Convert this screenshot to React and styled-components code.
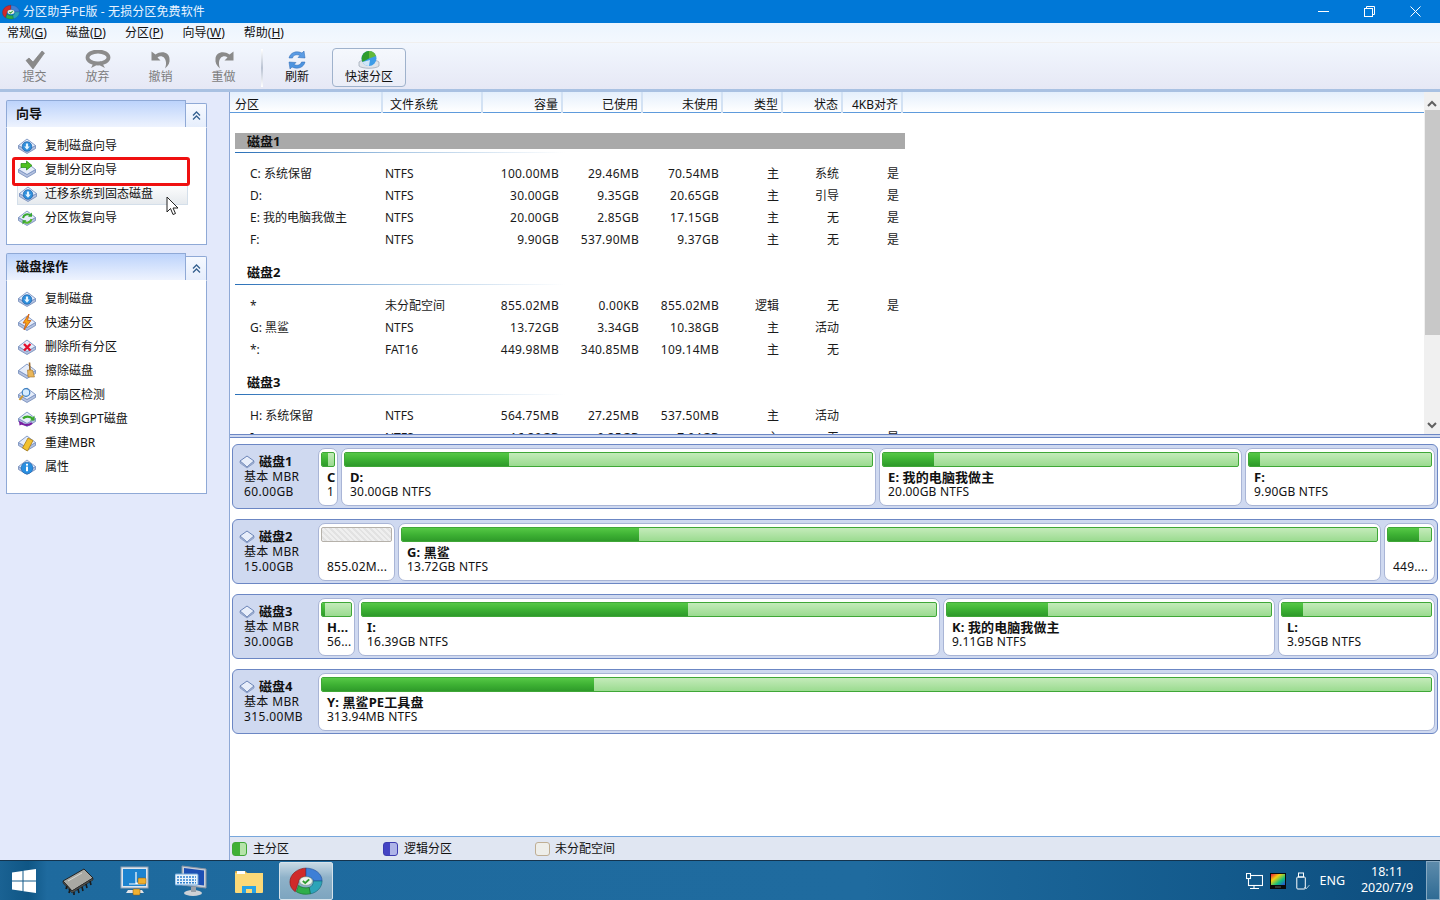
import React from "react";
import styled, { createGlobalStyle, css } from "styled-components";

const Global = createGlobalStyle`
  html, body { margin: 0; padding: 0; width: 1440px; height: 900px; overflow: hidden; background: #e3e9fb; }
  body { font: 12px/14px "Noto Sans", "Noto Sans CJK SC", sans-serif; color: #111; }
  * { box-sizing: border-box; }
`;

const Page = styled.div`
  width: 1440px; height: 900px; display: flex; flex-direction: column; position: relative; overflow: hidden;
`;

/* Title bar */
const TitleBar = styled.header`
  height: 23px; background: #0078d7; color: #fff; display: flex; align-items: center; padding-left: 2px; flex: none;
`;
const TitleText = styled.span` margin-left: 3px; font-size: 12px; letter-spacing: .1px; color: #e8f3ff; `;
const WinButtons = styled.div` margin-left: auto; display: flex; height: 100%; padding-right: 2px; `;
const WinButton = styled.div` width: 46px; display: flex; align-items: center; justify-content: center; `;

/* Menu */
const MenuBar = styled.nav`
  height: 20px; flex: none; display: flex; align-items: center; padding-left: 7px; gap: 19px;
  background: linear-gradient(#ecf5fe, #f3f8fe); border-bottom: 1px solid #f0efee;
`;
const MenuItem = styled.span` white-space: nowrap; u { text-underline-offset: 1px; } `;

/* Toolbar */
const ToolBar = styled.div`
  height: 49px; flex: none; display: flex; align-items: flex-start; padding: 5px 0 0 3px;
  background: linear-gradient(#f2f7fe, #e6e8f5);
  border-bottom: 3px solid #a9c1e2;
`;
const Tool = styled.div`
  width: 63px; height: 39px; display: flex; flex-direction: column; align-items: center; padding-top: 2px;
  color: ${p => (p.$off ? "#7d7d7d" : "#111")};
  svg { flex: none; height: 20px; }
`;
const ToolDivider = styled.div`
  width: 2px; height: 38px; margin: 1px 2px 0 6px; background: linear-gradient(#fff, #b9c2d2 50%, #fff);
`;
const ToolNarrow = styled(Tool)` width: 64px; margin-right: 3px; `;
const ToolActive = styled(Tool)`
  width: 74px; height: 39px; border: 1px solid #9fb2cc; border-radius: 4px; padding-top: 1px; background: linear-gradient(#f5f8fd, #eaedf7);
`;

/* Body */
const Body = styled.div` flex: 1; display: flex; min-height: 0; `;
const Sidebar = styled.aside`
  width: 229px; flex: none; position: relative; background: #e3e9fb; padding: 8px 22px 0 6px;
  display: flex; flex-direction: column; gap: 8px;
`;
const Panel = styled.section` width: 201px; `;
const PanelHead = styled.div` height: 27px; display: flex; align-items: flex-end; `;
const PanelTitle = styled.h3`
  margin: 0; width: 180px; height: 27px; line-height: 25px; padding-left: 9px; font-size: 13px; font-weight: 700; color: #111;
  background: linear-gradient(#bcd3fb, #eef3fe); border: 1px solid #8fa9d6; border-bottom: 0; border-radius: 2px 0 0 0;
`;
const PanelToggle = styled.div`
  width: 21px; height: 24px; background: linear-gradient(#f6f9ff, #e6eefc); border: 1px solid #8fa9d6; border-bottom: 0; border-left: 0;
  border-radius: 0 2px 0 0; display: flex; align-items: center; justify-content: center;
`;
const PanelBody = styled.div`
  height: ${p => p.$h}px; background: #fff; border: 1px solid #8fa9d6; border-top: 1px solid #fff; padding-top: 6px;
`;
const Task = styled.div`
  height: 24px; display: flex; align-items: center; padding-left: 10px; gap: 8px; white-space: nowrap;
  svg { flex: none; }
  ${p => p.$hover && css`
    padding-left: 0; gap: 7px; margin: 1px 18px 1px 10px; height: 22px;
    background: linear-gradient(#fff, #e6eaee); border: 1px solid #d4dfea; border-top: 0;
  `}
`;
const RedMark = styled.div`
  position: absolute; left: 12px; top: 65px; width: 178px; height: 29px; border: 3px solid #ef1010; border-radius: 3px;
`;
const Pointer = styled.svg` position: absolute; left: 166px; top: 104px; `;

/* Main */
const Main = styled.main`
  flex: 1; display: flex; flex-direction: column; border-left: 1px solid #8fa9d6; min-width: 0; background: #fff;
`;
const TablePane = styled.div` height: 343px; flex: none; display: flex; overflow: hidden; `;
const TableArea = styled.div` flex: 1; min-width: 0; overflow: hidden; `;
const Grid = css`
  display: grid; grid-template-columns: 152px 100px 80px 80px 80px 60px 60px 60px; width: 672px;
`;
const HeaderBand = styled.div`
  height: 21px; background: linear-gradient(#e4effc, #fff); border-bottom: 1px solid #5e9bdc;
`;
const HeaderRow = styled.div` ${Grid} height: 20px; `;
const HeadCell = styled.div`
  padding: 5px 3px 0 ${p => p.$pl ?? 3}px; margin-right: -1px; text-align: ${p => (p.$left ? "left" : "right")}; line-height: 16px;
  border-right: 2px solid #d3e2f4; white-space: nowrap;
`;
const Rows = styled.div` padding-top: 5px; `;
const Group = styled.div`
  margin: 14px 0 0 5px; width: 670px; height: 30px;
  &:first-child { margin-top: 15px; }
`;
const GroupBar = styled.div`
  height: 16px; line-height: ${p => (p.$on ? 17 : 15)}px; padding-left: 12px; font-size: 13px; font-weight: 700;
  background: ${p => (p.$on ? "#a9a9a9" : "transparent")};
`;
const GroupLine = styled.div`
  height: 1px; margin-top: 3px; width: 330px; background: linear-gradient(90deg, #2a70b8, #aac8e4 50%, #fff);
`;
const Row = styled.div` ${Grid} height: 22px; line-height: 22px; `;
const Cell = styled.div`
  padding: 0 3px 0 ${p => p.$pl ?? 3}px; text-align: ${p => (p.$left ? "left" : "right")}; white-space: nowrap;
  letter-spacing: ${p => (p.$num ? ".25px" : 0)}; color: #1a1a1a;
`;
const ScrollBar = styled.div`
  width: 16px; flex: none; background: #f0f0f0; display: flex; flex-direction: column; align-items: center; padding: 4px 0 3px;
`;
const ScrollArrow = styled.div` height: 14px; flex: none; display: flex; align-items: center; `;
const ScrollThumb = styled.div` width: 15px; height: 225px; background: #c8c8c8; flex: none; `;
const ScrollRest = styled.div` flex: 1; `;

const Splitter = styled.div`
  height: 4px; flex: none; background: #cfd9f0; border-top: 1px solid #6c87c4; border-bottom: 1px solid #6c87c4; margin-top: -1px;
`;
const DiskMap = styled.div` flex: 1; display: flex; flex-direction: column; gap: 10px; padding: 6px 2px 0; `;
const Disk = styled.article`
  height: 65px; background: #cfd9f0; border: 1px solid #6c87c4; border-radius: 6px; display: flex; padding-top: 3px; width: 1206px;
`;
const DiskInfo = styled.div` width: 85px; flex: none; padding: 6px 0 0 6px; display: flex; flex-direction: column; line-height: 15px; `;
const DiskName = styled.div` display: flex; align-items: center; gap: 4px; font-size: 13px; font-weight: 700; height: 15px; white-space: nowrap; `;
const DiskMeta = styled.div` padding-left: 5px; letter-spacing: .35px; white-space: nowrap; `;
const Partitions = styled.div` display: flex; gap: 3px; `;
const Partition = styled.div`
  width: ${p => p.$w}px; height: 58px; background: #fff; border: 1px solid #a9b5d6; border-radius: 7px; padding: 3px 2px; overflow: hidden; flex: none;
`;
const UsageBar = styled.div`
  height: 15px; border: 1px solid ${p => (p.$empty ? "#b5b1aa" : "#3fa737")}; border-radius: 2px; overflow: hidden;
  background: ${p => p.$empty ? "repeating-linear-gradient(45deg,#efefef 0 2px,#e2e2e2 2px 4px)" : "linear-gradient(#c4ebba,#9bdb90)"};
`;
const UsageFill = styled.div` height: 100%; background: linear-gradient(#56c846, #3eb234 50%, #2e9a2a); `;
const PartText = styled.div` padding: 3px 0 0 6px; white-space: nowrap; `;
const PartName = styled.div` font-size: 13px; font-weight: 700; height: 15px; line-height: 15px; letter-spacing: .1px; `;
const PartSize = styled.div` letter-spacing: .2px; line-height: 14px; `;
const Legend = styled.footer`
  height: 24px; flex: none; background: #e0e6f2; border-top: 1px solid #78a7dc; display: flex; align-items: center; padding: 1px 0 0 2px;
`;
const LegendItem = styled.div` width: ${p => p.$w}px; display: flex; align-items: center; gap: ${p => p.$gap ?? 6}px; flex: none; `;
const Swatch = styled.i`
  width: 15px; height: 14px; border-radius: 3px; border: 1px solid ${p => p.$b}; display: block;
  background: linear-gradient(90deg, ${p => p.$d} 50%, ${p => p.$l} 50%);
`;

/* Taskbar */
const Taskbar = styled.div`
  height: 40px; flex: none; display: flex; align-items: center; color: #fff; position: relative;
  background: linear-gradient(90deg, #1e6a9e, #1f6b9f 60%, #135a8c 85%, #0d4c7c); border-top: 1px solid #14334d;
`;
const StartButton = styled.div` width: 47px; height: 100%; display: flex; align-items: center; padding-left: 12px; background: linear-gradient(90deg,#1a6293,#0f5685 60%,#1e6a9e); `;
const Pin = styled.div` width: ${p => p.$w}px; height: 100%; display: flex; align-items: center; justify-content: center; flex: none; `;
const PinActive = styled(Pin)`
  height: 38px; background: linear-gradient(#c7d9e4, #8fb2c9 40%, #7da5bf); border: 1px solid #d5e2ea; border-radius: 2px; margin-left: 2px;
`;
const Tray = styled.div` margin-left: auto; display: flex; align-items: center; height: 100%; `;
const TrayIcon = styled.div` width: ${p => p.$w}px; display: flex; justify-content: center; flex: none; `;
const TrayLang = styled.span` margin: 0 12px 0 5px; font-size: 12.5px; `;
const Clock = styled.div` width: 60px; text-align: center; line-height: 16px; font-size: 12.5px; margin-top: -2px; `;
const ShowDesktop = styled.div` width: 14px; height: 39px; margin-left: 9px; background: linear-gradient(#5d8bab,#2f6b94); border: 1px solid #87a9c2; `;

/* ---------- drawings ---------- */
const Plate = () => (
  <g>
    <path d="M1.500 9.500 10 14.500l8.500-5v3L10 17.500l-8.500-5z" fill="#b4c2e0" stroke="#6f88b8" strokeWidth=".8" />
    <path d="M1.500 9.500 10 3l8.500 6.500-8.500 5z" fill="#e6edfa" stroke="#7b93c2" strokeWidth=".9" />
  </g>
);
const DiskIcon = ({ children }) => (
  <svg width="20" height="20" viewBox="0 0 20 20"><Plate />{children}</svg>
);
const BlueArrow = () => (<g><circle cx="10" cy="10.500" r="4.800" fill="#2f8fdc" stroke="#1a5fa8" strokeWidth=".7" /><path d="M8.900 7.500h2.200v3h1.700L10 13.700l-2.800-3.200h1.700z" fill="#e6f5ff" /></g>);
const icons = {
  copyDisk: <BlueArrow />,
  copyPart: <path d="M4 3.500h5.500V1L15 5.500 9.500 10V7.500H4z" fill="#4fc01f" stroke="#1f8a14" strokeWidth=".7" />,
  recover: <g fill="none" strokeWidth="2"><path d="M6 10a4.500 4.500 0 0 1 7.500-2.500" stroke="#37a72f" /><path d="M14.500 11a4.500 4.500 0 0 1-7.500 2.500" stroke="#55b92a" /><path d="M15 4.500v4.200h-4z M5.500 16.500v-4.200h4z" fill="#37a72f" stroke="none" /></g>,
  bolt: <path d="M12 1 6 10h3l-2 7 7-9.500h-3.400z" fill="#f7a416" stroke="#c8550c" strokeWidth=".8" />,
  del: <path d="M7 7l6.500 6.500M13.500 7 7 13.500" fill="none" stroke="#e3102c" strokeWidth="2.400" />,
  broom: <g><path d="M12.500 1.500 13 9" stroke="#9a6a2c" strokeWidth="1.600" /><path d="M10.500 9h5l2 7h-6.500z" fill="#e9b65a" stroke="#a3742c" strokeWidth=".6" /></g>,
  scan: <g><circle cx="9" cy="7.500" r="3.800" fill="#d6ecff" stroke="#3b7ec0" strokeWidth="1.200" /><path d="M6 10.500 2.500 15" stroke="#d29a2e" strokeWidth="2" /></g>,
  gpt: <g fill="none" strokeWidth="2.200"><path d="M4 13.500c2 3 8 3.500 11 .5" stroke="#7a1fa2" /><path d="M6 9.500c2-2.500 7-2.800 10 .5" stroke="#3aa92c" /><path d="M17.500 6.500v5h-4.500z" fill="#3aa92c" stroke="none" /><path d="M2 11.500l.5 5 4-1.500z" fill="#7a1fa2" stroke="none" /></g>,
  mbr: <path d="M5.500 15 11 5l5 2.500L10.500 18z" fill="#f2c12e" stroke="#a97b10" strokeWidth=".8" />,
  info: <g><circle cx="10" cy="11" r="5.800" fill="#2a8fe0" stroke="#1868b4" strokeWidth=".7" /><rect x="9" y="9.600" width="2" height="4.600" fill="#fff" /><rect x="9" y="6.800" width="2" height="1.800" fill="#fff" /></g>,
};
const Check = () => (<svg width="24" height="20" viewBox="0 0 24 20"><path d="M3 10.500 6 8l4 4L19 1l2.500 2L10 19z" fill="#8a8a8a" stroke="#777" strokeWidth=".6" /></svg>);
const Discard = () => (<svg width="26" height="20" viewBox="0 0 26 20"><ellipse cx="13" cy="7.500" rx="10.500" ry="6" fill="none" stroke="#8c8c8c" strokeWidth="3.800" /><path d="M6 18l3.500-7 3.500 3 3-3 4 7-4-2-3-2-3 2z" fill="#8c8c8c" /></svg>);
const Undo = ({ flip }) => (
  <svg width="22" height="20" viewBox="0 0 22 20"><g transform={flip ? "translate(22 0) scale(-1 1)" : undefined}><path d="M1.500 1.500v9h9l-3-3c3-2.500 8-1 8.500 5 .2 2-.3 4-1 6 3.500-3 5-6 4.500-9.500C19.600 3 12 0 5.500 4.500z" fill="#8a8a8a" /></g></svg>
);
const Refresh = () => (
  <svg width="22" height="20" viewBox="0 0 22 20"><path d="M3 8C4 3 10 0 16 3l2-2 1 7-7-.5 2-2C11 4 7 5 6.500 8z" fill="#5a9be4" stroke="#2a66b0" strokeWidth=".5" /><path d="M19 12c-1 5-7 8-13 5l-2 2-1-7 7 .5-2 2c3 1.500 7 .5 7.500-2.500z" fill="#4d94e0" stroke="#2a66b0" strokeWidth=".5" /></svg>
);
const QuickPart = () => (
  <svg width="26" height="20" viewBox="0 0 26 20"><path d="M3 12c3-3 17-3 20 0v4c-3 3-17 3-20 0z" fill="#dfe3ea" stroke="#9aa3b2" strokeWidth=".7" /><circle cx="13" cy="8.500" r="7.500" fill="#3d9ce8" /><path d="M13 1a7.500 7.500 0 0 0-6.500 11L13 8.500z" fill="#2e9d2e" /><path d="M13 1a7.500 7.500 0 0 1 7 5L13 8.500z" fill="#62b93a" /><path d="M6.500 12a7.500 7.500 0 0 0 6.500 4l1-6z" fill="#cfe6f8" /></svg>
);
const AppIcon = ({ w, h }) => (
  <svg width={w} height={h} viewBox="0 0 32 28">
    <path d="M1 15C1 7 9 2 16 2v8c-4 0-7 2-7 5l-3 9C3 22 1 19 1 15z" fill="#cf2a2a" stroke="#8a1212" strokeWidth=".6" />
    <path d="M16 2c8 0 15 5 15 12H23c0-2-3-4-7-4z" fill="#3d7fd6" stroke="#1f4f9a" strokeWidth=".6" />
    <path d="M31 14c0 6-5 11-11 12l-1-6c2-.5 4-3 4-6z" fill="#2ca4b8" stroke="#17677a" strokeWidth=".6" />
    <path d="M9 18c2 2 6 3 10 2l1 6c-5 1-10 0-13-2z" fill="#2fae4a" stroke="#15702a" strokeWidth=".6" />
    <ellipse cx="16" cy="14" rx="6" ry="4" fill="#eef3ee" stroke="#7aa07a" strokeWidth=".5" />
    <path d="M13 14l2.300 1.800 3.700-3.300" fill="none" stroke="#2e9d2e" strokeWidth="1.800" />
  </svg>
);
const WinLogo = () => (
  <svg width="24" height="24" viewBox="0 0 24 24" fill="#fff"><path d="M0 3.500 10.500 2v9.500H0zM11.500 1.800 24 0v11.500H11.500zM0 12.500h10.500V22L0 20.500zM11.500 12.500H24V24l-12.500-1.800z" /></svg>
);
const Chip = () => (
  <svg width="32" height="28" viewBox="0 0 32 28"><path d="M1 14 22 2l9 9-21 13z" fill="#a9a9a3" stroke="#222" strokeWidth="1" /><path d="M1 14l9 10 21-13v2L10 26 1 16z" fill="#55534e" stroke="#222" strokeWidth=".6" /><path d="M5 19l-1 3M8 22l-1 4M12 25l0 3M16 22l1 4M20 20l1 4M24 17l1 4M28 14l1 4" stroke="#1a1a1a" strokeWidth="1.600" /><path d="M6 14l14-8" stroke="#d8d8d2" strokeWidth="1" /></svg>
);
const LockMonitor = () => (
  <svg width="30" height="30" viewBox="0 0 30 30"><rect x="1" y="1" width="27" height="21" fill="#dfe6ee" stroke="#8fa0b3" /><rect x="3" y="3" width="23" height="17" fill="#1d83cf" /><path d="M16 6v11h8v1H9" stroke="#fff" strokeWidth="1.200" fill="none" /><path d="M8 24h14l2 3H6z" fill="#e2e4e8" /><rect x="18" y="12" width="8" height="6" rx="1" fill="#f0b030" stroke="#8a5a10" strokeWidth=".5" /><rect x="13" y="23" width="7" height="6" rx="1" fill="#f0b030" stroke="#8a5a10" strokeWidth=".5" /></svg>
);
const KbMonitor = () => (
  <svg width="32" height="32" viewBox="0 0 32 32"><path d="M7 1l24 3v19l-24-3z" fill="#c8d0da" stroke="#8b95a4" /><path d="M9 3l20 2.500v15L9 18z" fill="#1c4fb4" /><ellipse cx="18" cy="28" rx="9" ry="3" fill="#cfd2d6" /><rect x="16" y="22" width="5" height="5" fill="#9aa0a8" /><rect x="0" y="9" width="23" height="11" rx="1" fill="#eaf3fb" stroke="#70a8da" /><path d="M2 12h19M2 15h19M2 17.800h19" stroke="#2c80cf" strokeWidth="1.400" strokeDasharray="2 1" /></svg>
);
const Folder = () => (
  <svg width="28" height="24" viewBox="0 0 28 24"><path d="M0 3a1 1 0 0 1 1-1h9l3 2.500H0z" fill="#e0b24a" /><path d="M0 4h28v19a1 1 0 0 1-1 1H1a1 1 0 0 1-1-1z" fill="#fbd978" /><rect x="2" y="2" width="8" height="3" fill="#fff" /><path d="M7 24v-7h14v7h-4v-4h-6v4z" fill="#26a3e6" /></svg>
);
const TrayNet = () => (
  <svg width="17" height="16" viewBox="0 0 17 16" fill="none" stroke="#fff" strokeWidth="1.100"><rect x="2.500" y="2.500" width="14" height="10" /><path d="M8 13v2M4 15.500h9" /><rect x=".5" y=".5" width="4" height="5" fill="#0f5685" /></svg>
);
const TrayColor = () => (
  <svg width="16" height="16" viewBox="0 0 16 16"><rect width="16" height="16" fill="#0a0a0a" /><defs><linearGradient id="rb" x1="0" x2="1" y1="0" y2="1"><stop offset="0" stopColor="#e8143a" /><stop offset=".33" stopColor="#f2d010" /><stop offset=".66" stopColor="#12c07c" /><stop offset="1" stopColor="#2848e0" /></linearGradient></defs><rect x="1" y="1" width="14" height="11" fill="url(#rb)" /><rect x="5" y="13" width="6" height="2" fill="#333" /></svg>
);
const TrayUsb = () => (
  <svg width="14" height="18" viewBox="0 0 14 18" fill="none" stroke="#fff"><rect x="2.500" y="1" width="5" height="4" /><rect x=".8" y="5" width="8.500" height="12" rx="1" /><path d="M8 15l2 2 3.500-4" stroke="#a9c2d2" /></svg>
);

const columns = ["分区", "文件系统", "容量", "已使用", "未使用", "类型", "状态", "4KB对齐"];
const groups = [
  { name: "磁盘1", on: true, rows: [
    ["C: 系统保留", "NTFS", "100.00MB", "29.46MB", "70.54MB", "主", "系统", "是"],
    ["D:", "NTFS", "30.00GB", "9.35GB", "20.65GB", "主", "引导", "是"],
    ["E: 我的电脑我做主", "NTFS", "20.00GB", "2.85GB", "17.15GB", "主", "无", "是"],
    ["F:", "NTFS", "9.90GB", "537.90MB", "9.37GB", "主", "无", "是"],
  ]},
  { name: "磁盘2", rows: [
    ["*", "未分配空间", "855.02MB", "0.00KB", "855.02MB", "逻辑", "无", "是"],
    ["G: 黑鲨", "NTFS", "13.72GB", "3.34GB", "10.38GB", "主", "活动", ""],
    ["*:", "FAT16", "449.98MB", "340.85MB", "109.14MB", "主", "无", ""],
  ]},
  { name: "磁盘3", rows: [
    ["H: 系统保留", "NTFS", "564.75MB", "27.25MB", "537.50MB", "主", "活动", ""],
    ["I:", "NTFS", "16.39GB", "9.35GB", "7.04GB", "主", "无", "是"],
  ]},
];
const disks = [
  { name: "磁盘1", size: "60.00GB", parts: [
    { w: 20, f: 46, n: "C", s: "1" },
    { w: 535, f: 31.1, n: "D:", s: "30.00GB NTFS" },
    { w: 363, f: 14.5, n: "E: 我的电脑我做主", s: "20.00GB NTFS" },
    { w: 190, f: 6, n: "F:", s: "9.90GB NTFS" },
  ]},
  { name: "磁盘2", size: "15.00GB", parts: [
    { w: 77, empty: true, n: "", s: "855.02M..." },
    { w: 983, f: 24.3, n: "G: 黑鲨", s: "13.72GB NTFS" },
    { w: 51, f: 73, n: "", s: "449...." },
  ]},
  { name: "磁盘3", size: "30.00GB", parts: [
    { w: 37, f: 12, n: "H...", s: "56..." },
    { w: 582, f: 56.8, n: "I:", s: "16.39GB NTFS" },
    { w: 332, f: 31.1, n: "K: 我的电脑我做主", s: "9.11GB NTFS" },
    { w: 157, f: 14, n: "L:", s: "3.95GB NTFS" },
  ]},
  { name: "磁盘4", size: "315.00MB", parts: [
    { w: 1117, f: 24.5, n: "Y: 黑鲨PE工具盘", s: "313.94MB NTFS" },
  ]},
];
const wizard = [["copyDisk", "复制磁盘向导"], ["copyPart", "复制分区向导"], ["copyDisk", "迁移系统到固态磁盘", true], ["recover", "分区恢复向导"]];
const ops = [["copyDisk", "复制磁盘"], ["bolt", "快速分区"], ["del", "删除所有分区"], ["broom", "擦除磁盘"], ["scan", "坏扇区检测"], ["gpt", "转换到GPT磁盘"], ["mbr", "重建MBR"], ["info", "属性"]];

const Chevrons = () => (
  <svg width="9" height="10" viewBox="0 0 9 10" fill="none" stroke="#35608f" strokeWidth="1.300"><path d="M1 4.500 4.500 1 8 4.500M1 8.500 4.500 5 8 8.500" /></svg>
);
const SideTasks = ({ items }) => items.map(([ic, label, hover]) => (
  <Task key={label} $hover={hover}><DiskIcon>{icons[ic]}</DiskIcon><span>{label}</span></Task>
));

export default function App() {
  return (
    <Page>
      <Global />
      <TitleBar>
        <AppIcon w={18} h={16} />
        <TitleText>分区助手PE版 - 无损分区免费软件</TitleText>
        <WinButtons>
          <WinButton><svg width="11" height="2"><rect width="11" height="1" fill="#fff" /></svg></WinButton>
          <WinButton><svg width="11" height="11" fill="none" stroke="#fff"><rect x=".5" y="2.500" width="8" height="8" /><path d="M2.500 2.500v-2h8v8h-2" /></svg></WinButton>
          <WinButton><svg width="11" height="11" stroke="#fff"><path d="M.5.500l10 10M10.500.500l-10 10" /></svg></WinButton>
        </WinButtons>
      </TitleBar>
      <MenuBar>
        <MenuItem>常规(<u>G</u>)</MenuItem>
        <MenuItem>磁盘(<u>D</u>)</MenuItem>
        <MenuItem>分区(<u>P</u>)</MenuItem>
        <MenuItem>向导(<u>W</u>)</MenuItem>
        <MenuItem>帮助(<u>H</u>)</MenuItem>
      </MenuBar>
      <ToolBar>
        <Tool $off><Check /><span>提交</span></Tool>
        <Tool $off><Discard /><span>放弃</span></Tool>
        <Tool $off><Undo /><span>撤销</span></Tool>
        <Tool $off><Undo flip /><span>重做</span></Tool>
        <ToolDivider />
        <ToolNarrow><Refresh /><span>刷新</span></ToolNarrow>
        <ToolActive><QuickPart /><span>快速分区</span></ToolActive>
      </ToolBar>
      <Body>
        <Sidebar>
          <Panel>
            <PanelHead><PanelTitle>向导</PanelTitle><PanelToggle><Chevrons /></PanelToggle></PanelHead>
            <PanelBody $h={118}><SideTasks items={wizard} /></PanelBody>
          </Panel>
          <Panel>
            <PanelHead><PanelTitle>磁盘操作</PanelTitle><PanelToggle><Chevrons /></PanelToggle></PanelHead>
            <PanelBody $h={214}><SideTasks items={ops} /></PanelBody>
          </Panel>
          <RedMark />
          <Pointer width="13" height="20" viewBox="0 0 13 20"><path d="M1 1v15l3.500-3.500L7 18.500l2.500-1-2.500-5.500h5z" fill="#fff" stroke="#222" strokeWidth="1" /></Pointer>
        </Sidebar>
        <Main>
          <TablePane>
            <TableArea>
              <HeaderBand>
                <HeaderRow>
                  {columns.map((c, i) => (
                    <HeadCell key={c} $left={i < 2} $pl={i === 0 ? 5 : i === 1 ? 8 : 3}>{c}</HeadCell>
                  ))}
                </HeaderRow>
              </HeaderBand>
              <Rows>
                {groups.map(g => (
                  <React.Fragment key={g.name}>
                    <Group><GroupBar $on={g.on}>{g.name}</GroupBar><GroupLine /></Group>
                    {g.rows.map(r => (
                      <Row key={r[0]}>
                        {r.map((v, i) => (
                          <Cell key={i} $left={i < 2} $pl={i === 0 ? 20 : 3} $num={i >= 2 && i <= 4}>{v}</Cell>
                        ))}
                      </Row>
                    ))}
                  </React.Fragment>
                ))}
              </Rows>
            </TableArea>
            <ScrollBar>
              <ScrollArrow><svg width="10" height="7" fill="none" stroke="#606060" strokeWidth="2"><path d="M1 6l4-4 4 4" /></svg></ScrollArrow>
              <ScrollThumb />
              <ScrollRest />
              <ScrollArrow><svg width="10" height="7" fill="none" stroke="#606060" strokeWidth="2"><path d="M1 1l4 4 4-4" /></svg></ScrollArrow>
            </ScrollBar>
          </TablePane>
          <Splitter />
          <DiskMap>
            {disks.map(d => (
              <Disk key={d.name}>
                <DiskInfo>
                  <DiskName>
                    <svg width="16" height="14" viewBox="0 0 16 14"><path d="M1 6 8 1l7 5-7 6z" fill="#e8eefa" stroke="#6b84b6" /><path d="M1 6v2l7 5 7-5V6l-7 6z" fill="#aebbd8" stroke="#6b84b6" strokeWidth=".6" /></svg>
                    {d.name}
                  </DiskName>
                  <DiskMeta>基本 MBR</DiskMeta>
                  <DiskMeta>{d.size}</DiskMeta>
                </DiskInfo>
                <Partitions>
                  {d.parts.map((p, i) => (
                    <Partition key={i} $w={p.w}>
                      <UsageBar $empty={p.empty}>{!p.empty && <UsageFill style={{ width: `${p.f}%` }} />}</UsageBar>
                      <PartText><PartName>{p.n}</PartName><PartSize>{p.s}</PartSize></PartText>
                    </Partition>
                  ))}
                </Partitions>
              </Disk>
            ))}
          </DiskMap>
          <Legend>
            <LegendItem $w={151}><Swatch $b="#3fa737" $d="#3fb034" $l="#b5e4aa" /><span>主分区</span></LegendItem>
            <LegendItem $w={152}><Swatch $b="#3c3cb0" $d="#4444c4" $l="#aeb4e8" /><span>逻辑分区</span></LegendItem>
            <LegendItem $w={120} $gap={5}><Swatch $b="#bfae94" $d="#eeeeea" $l="#eeeeea" /><span>未分配空间</span></LegendItem>
          </Legend>
        </Main>
      </Body>
      <Taskbar>
        <StartButton><WinLogo /></StartButton>
        <Pin $w={62}><Chip /></Pin>
        <Pin $w={52}><LockMonitor /></Pin>
        <Pin $w={60}><KbMonitor /></Pin>
        <Pin $w={56}><Folder /></Pin>
        <PinActive $w={54}><AppIcon w={36} h={30} /></PinActive>
        <Tray>
          <TrayIcon $w={20}><TrayNet /></TrayIcon>
          <TrayIcon $w={28}><TrayColor /></TrayIcon>
          <TrayIcon $w={22}><TrayUsb /></TrayIcon>
          <TrayLang>ENG</TrayLang>
          <Clock>18:11<br />2020/7/9</Clock>
          <ShowDesktop />
        </Tray>
      </Taskbar>
    </Page>
  );
}
